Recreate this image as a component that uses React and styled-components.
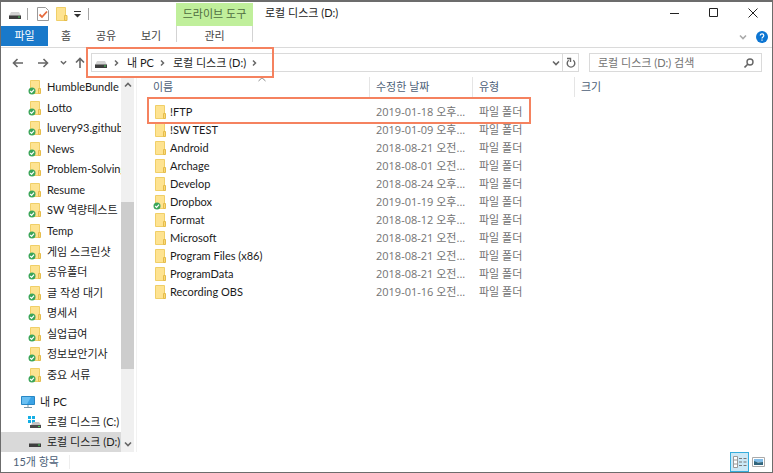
import React from 'react'
import styled, { createGlobalStyle, ThemeProvider } from 'styled-components'

const theme = {
  text: '#1b1b1b',
  muted: '#737373',
  heading: '#4d5f78',
  line: '#dadada',
  accent: '#f5825f',
  blue: '#1979ca'
}

const GlobalStyle = createGlobalStyle`
  * {
    box-sizing: border-box;
  }
  body {
    margin: 0;
    font-family: Lato, "Noto Sans CJK KR", sans-serif;
    font-size: 11px;
    line-height: 18px;
  }
  button, input {
    font: inherit;
    color: inherit;
  }
  a {
    color: inherit;
    text-decoration: none;
  }
  svg {
    display: block;
    flex: none;
  }
`

const Window = styled.div`
  display: flex;
  flex-direction: column;
  height: 100vh;
  border: 1px solid #6c6c6c;
  border-top-width: 2px;
  background: #fff;
  color: ${props => props.theme.text};
  overflow: hidden;
`

const TitleBar = styled.header`
  display: flex;
  height: 24px;
  flex: none;
`

const QuickAccess = styled.div`
  display: flex;
  align-items: center;
  width: 175px;
  padding-left: 7px;
`

const Divider = styled.span`
  width: 1px;
  height: 12px;
  margin: 0 5px;
  background: #a5a5a5;
`

const IconButton = styled.button`
  display: flex;
  align-items: center;
  justify-content: center;
  flex: none;
  width: ${props => props.$width || 20}px;
  height: ${props => props.$height || 20}px;
  padding: 0;
  border: 0;
  background: none;
  color: ${props => props.$color || '#666'};
`

const ToolGroup = styled.div`
  width: 77px;
  margin-top: 1px;
  padding-top: 2px;
  background: #c0ef9b;
  color: #4f6c40;
  text-align: center;
`

const WindowTitle = styled.h1`
  flex: 1;
  margin: 0;
  padding: 2px 12px;
  font-size: 11px;
  font-weight: 400;
`

const Tabs = styled.nav`
  display: flex;
  flex: none;
  height: 22px;
  border-bottom: 1px solid ${props => props.theme.line};
`

const Tab = styled.button`
  width: ${props => props.$width}px;
  height: 20px;
  padding: 0;
  border: 0;
  background: ${props => props.$primary ? props.theme.blue : 'none'};
  color: ${props => props.$primary ? '#fff' : '#444'};
`

const ToolTab = styled(Tab)`
  height: 16px;
  margin-left: 2px;
  padding-top: 2px;
  border: solid #d3d3d3;
  border-width: 0 1px;
  line-height: 16px;
`

const Spacer = styled.div`
  flex: 1;
`

const Toolbar = styled.div`
  display: flex;
  flex: none;
  align-items: center;
  height: 29px;
  padding: 0 10px 0 5px;
`

const Address = styled.div`
  position: relative;
  display: flex;
  flex: 1;
  align-items: center;
  height: 19px;
  border: 1px solid ${props => props.theme.line};
`

const Crumbs = styled.ol`
  display: flex;
  flex: 1;
  align-items: center;
  margin: 0;
  padding: 0 0 0 2px;
  list-style: none;
  white-space: nowrap;

  li {
    display: flex;
    align-items: center;
  }
`

const CrumbArrow = styled.svg`
  margin: 0 8px 0 6px;
`

const AddressMark = styled.div`
  position: absolute;
  z-index: 1;
  top: -7px;
  left: -6px;
  width: 188px;
  height: 31px;
  border: 2px solid ${props => props.theme.accent};
  pointer-events: none;
`

const RefreshCell = styled.div`
  border-left: 1px solid ${props => props.theme.line};
`

const Search = styled.form`
  display: flex;
  align-items: center;
  width: 173px;
  height: 19px;
  margin-left: 10px;
  border: 1px solid ${props => props.theme.line};
`

const SearchInput = styled.input`
  flex: 1;
  min-width: 0;
  height: 17px;
  padding: 0 0 0 8px;
  border: 0;
  outline: 0;

  &::placeholder {
    color: ${props => props.theme.muted};
    opacity: 1;
  }
`

const Body = styled.div`
  display: flex;
  flex: 1;
  min-height: 0;
`

const Sidebar = styled.aside`
  display: flex;
  flex: none;
  width: 136px;
  border-right: 1px solid #f2f2f2;
`

const Tree = styled.nav`
  flex: 1;
  min-width: 0;
  overflow: hidden;
`

const FolderList = styled.ul`
  display: grid;
  grid-auto-rows: 1fr;
  height: 308px;
  margin: 0 0 7px;
  padding: 0;
  list-style: none;
`

const DriveList = styled.ul`
  margin: 0;
  padding: 0;
  list-style: none;
`

const TreeLink = styled.a`
  display: flex;
  align-items: center;
  gap: ${props => props.$root ? 4 : 5}px;
  height: ${props => props.$folder ? '100%' : '20px'};
  padding-left: ${props => props.$root ? 20 : 27}px;
  background: ${props => props.$selected ? '#d9d9d9' : 'none'};
  white-space: nowrap;
`

const Scrollbar = styled.div`
  display: flex;
  flex-direction: column;
  width: 13px;
  margin-right: 2px;
  background: #f0f0f0;
`

const Track = styled.div`
  display: grid;
  grid-template-rows: 109fr 167fr 67fr;
  flex: 1;
`

const Thumb = styled.div`
  grid-row: 2;
  background: #cdcdcd;
`

const Files = styled.main`
  position: relative;
  flex: 1;
  min-width: 0;
  padding-left: 10px;
`

const FileTable = styled.table`
  width: 100%;
  table-layout: fixed;
  border-collapse: separate;
  border-spacing: 0;

  th {
    position: relative;
    height: 20px;
    padding: 0 0 0 6px;
    border-right: 1px solid #e5e5e5;
    color: ${props => props.theme.heading};
    font-weight: 400;
    text-align: left;
  }
  th:last-child {
    border: 0;
  }
  td {
    height: 18px;
    padding: 0 6px;
    color: ${props => props.theme.muted};
    white-space: nowrap;
  }
  tbody::before {
    content: "";
    display: block;
    height: 6px;
  }
`

const DateCell = styled.td`
  font-family: "Open Sans", "Noto Sans CJK KR", sans-serif;
`

const SortArrow = styled.svg`
  position: absolute;
  top: 0;
  left: 50%;
`

const FileName = styled.a`
  display: flex;
  align-items: center;
  gap: 3px;
  color: ${props => props.theme.text};
`

const RowMark = styled.div`
  position: absolute;
  top: 20px;
  left: 10px;
  width: 384px;
  height: 27px;
  border: 2px solid ${props => props.theme.accent};
  pointer-events: none;
`

const StatusBar = styled.footer`
  display: flex;
  flex: none;
  align-items: center;
  height: 20px;
  padding: 0 4px 0 12px;
  color: ${props => props.theme.heading};
`

const Count = styled.span`
  padding-right: 10px;
  border-right: 1px solid #eee;
  line-height: 14px;
`

const ViewButton = styled.button`
  display: flex;
  align-items: center;
  justify-content: center;
  width: 19px;
  height: 20px;
  padding: 0;
  border: ${props => props.$active ? '1px solid #35addc' : '0'};
  background: ${props => props.$active ? '#cbe8f6' : 'none'};
`

const DriveIcon = () =>
  <svg width="14" height="16" viewBox="0 0 14 16">
    <path d="M3 6h8l2 4H1z" fill="#d2d2d2" />
    <path d="M1 9.500h12V13H1z" fill="#3d3d3d" />
    <path d="M10 11h2" stroke="#4bd35f" />
  </svg>

const SystemDriveIcon = () =>
  <svg width="14" height="16" viewBox="0 0 14 16">
    <path d="M0 2h3v3H0zM4 2h3v3H4zM0 6h3v3H0zM4 6h3v3H4z" fill="#13aee5" />
    <path d="M5 8h6l2 3H3z" fill="#c4c4c4" />
    <path d="M2 11h11v3H2z" fill="#4b4b4b" />
    <path d="M10 12.500h2" stroke="#4bd35f" />
  </svg>

const FolderIcon = ({ synced }) =>
  <svg width="14" height="16" viewBox="0 0 14 16">
    <path d="M2.500 1.500h9v13h-9z" fill="#fee391" stroke="#f0cf68" />
    <path d="M10.500 9.500h2v5h-2z" fill="#fbd976" stroke="#e5bc4c" />
    {synced &&
      <>
        <circle cx="4" cy="12" r="3.500" fill="#3ba55a" />
        <path d="M2.200 12l1.400 1.400 2.400-2.700" fill="none" stroke="#fff" strokeWidth="1.200" />
      </>}
  </svg>

const PlainFolderIcon = () =>
  <svg width="12" height="16" viewBox="0 0 12 16">
    <path d="M.5 1.500h9v13h-9z" fill="#fee391" stroke="#f0cf68" />
    <path d="M8.500 9.500H11v5H8.500z" fill="#fbd976" stroke="#e5bc4c" />
  </svg>

const ComputerIcon = () =>
  <svg width="15" height="14" viewBox="0 0 15 14">
    <path d="M.5 1.500h13v8H.5z" fill="#3ba3e6" stroke="#2787c5" />
    <path d="M1 2h9L6 9H1z" fill="#69bff2" />
    <path d="M3 12.500h8M6 11h2" stroke="#7b95a5" />
  </svg>

const PropertiesIcon = () =>
  <svg width="12" height="14" viewBox="0 0 12 14">
    <path d="M.5.5h8l3 3v10H.5z" fill="#fff" stroke="#999" />
    <path d="M2.500 7.500l2.500 2.500 5-5.500" fill="none" stroke="#e5693b" strokeWidth="1.800" />
  </svg>

const Chevron = ({ dir, size = 8 }) => {
  const paths = {
    down: 'M1 2.500l3 3 3-3',
    up: 'M1 5.500l3-3 3 3'
  }
  return (
    <svg width={size} height={size} viewBox="0 0 8 8">
      <path d={paths[dir]} fill="none" stroke="currentColor" strokeWidth="1.600" />
    </svg>
  )
}

const Arrow = ({ rotate }) =>
  <svg width="12" height="12" viewBox="0 0 12 12">
    <path
      d="M11 6H1.500M5.500 2l-4 4 4 4"
      fill="none"
      stroke="currentColor"
      strokeWidth="1.600"
      transform={`rotate(${rotate} 6 6)`}
    />
  </svg>

const Crumb = ({ children }) =>
  <li>
    <CrumbArrow width="5" height="8" viewBox="0 0 5 8">
      <path d="M1 1.500L3.500 4 1 6.500" fill="none" stroke="#666" strokeWidth="1.500" />
    </CrumbArrow>
    {children && <a href="#path">{children}</a>}
  </li>

const folders = [
  'HumbleBundle S', 'Lotto', 'luvery93.github.', 'News', 'Problem-Solving',
  'Resume', 'SW 역량테스트', 'Temp', '게임 스크린샷', '공유폴더', '글 작성 대기',
  '명세서', '실업급여', '정보보안기사', '중요 서류'
]

const files = [
  { name: '!FTP', date: '2019-01-18 오후...' },
  { name: '!SW TEST', date: '2019-01-09 오후...' },
  { name: 'Android', date: '2018-08-21 오전...' },
  { name: 'Archage', date: '2018-08-01 오전...' },
  { name: 'Develop', date: '2018-08-24 오후...' },
  { name: 'Dropbox', date: '2019-01-19 오후...', synced: true },
  { name: 'Format', date: '2018-08-12 오후...' },
  { name: 'Microsoft', date: '2018-08-21 오전...' },
  { name: 'Program Files (x86)', date: '2018-08-21 오전...' },
  { name: 'ProgramData', date: '2018-08-21 오전...' },
  { name: 'Recording OBS', date: '2019-01-16 오전...' }
]

const Caption = () =>
  <TitleBar>
    <QuickAccess>
      <DriveIcon />
      <Divider />
      <IconButton aria-label="속성"><PropertiesIcon /></IconButton>
      <IconButton $width={18} aria-label="새 폴더"><PlainFolderIcon /></IconButton>
      <IconButton $width={12} aria-label="빠른 실행 도구 모음 사용자 지정">
        <svg width="7" height="7" viewBox="0 0 7 7">
          <path d="M0 .5h7" stroke="#333" />
          <path d="M0 3h7L3.500 6.500z" fill="#333" />
        </svg>
      </IconButton>
      <Divider />
    </QuickAccess>
    <ToolGroup>드라이브 도구</ToolGroup>
    <WindowTitle>로컬 디스크 (D:)</WindowTitle>
    <IconButton $width={39} $height={22} $color="#222" aria-label="최소화">
      <svg width="10" height="10"><path d="M0 5.500h9" stroke="currentColor" /></svg>
    </IconButton>
    <IconButton $width={39} $height={22} $color="#222" aria-label="최대화">
      <svg width="10" height="10"><path d="M.5.5h8v8h-8z" fill="none" stroke="currentColor" /></svg>
    </IconButton>
    <IconButton $width={39} $height={22} $color="#222" aria-label="닫기">
      <svg width="10" height="10"><path d="M.5.5l9 9M9.500.5l-9 9" stroke="currentColor" /></svg>
    </IconButton>
  </TitleBar>

const Ribbon = () =>
  <Tabs>
    <Tab $width={47} $primary>파일</Tab>
    <Tab $width={36}>홈</Tab>
    <Tab $width={44}>공유</Tab>
    <Tab $width={46}>보기</Tab>
    <ToolTab $width={77}>관리</ToolTab>
    <Spacer />
    <IconButton $width={18} $height={22} $color="#aaa" aria-label="리본 확장"><Chevron dir="down" /></IconButton>
    <IconButton $height={22} aria-label="도움말">
      <svg width="12" height="12" viewBox="0 0 12 12">
        <circle cx="6" cy="6" r="6" fill="#0c75d2" />
        <path d="M4.300 4.600c0-2.400 3.500-2.200 3.500 0C7.800 6 6 5.900 6 7.500M6 8.600v1.200" fill="none" stroke="#fff" strokeWidth="1.200" />
      </svg>
    </IconButton>
  </Tabs>

const Navigation = () =>
  <Toolbar>
    <IconButton $width={23} aria-label="뒤로"><Arrow rotate={0} /></IconButton>
    <IconButton $width={28} aria-label="앞으로"><Arrow rotate={180} /></IconButton>
    <IconButton $width={12} aria-label="최근 위치"><Chevron dir="down" size={7} /></IconButton>
    <IconButton $width={22} aria-label="위로"><Arrow rotate={90} /></IconButton>
    <Address>
      <AddressMark />
      <Crumbs>
        <li><DriveIcon /></li>
        <Crumb>내 PC</Crumb>
        <Crumb>로컬 디스크 (D:)</Crumb>
        <Crumb />
      </Crumbs>
      <IconButton $width={12} $height={17} aria-label="이전 위치"><Chevron dir="down" /></IconButton>
      <RefreshCell>
        <IconButton $width={15} $height={17} aria-label="새로 고침">
          <svg width="10" height="12" viewBox="0 0 10 12">
            <path d="M7.300 3.300A3.800 3.800 0 1 1 2.700 3.300" fill="none" stroke="currentColor" strokeWidth="1.400" />
            <path d="M1 1.500h3.500V5" fill="none" stroke="currentColor" strokeWidth="1.400" />
          </svg>
        </IconButton>
      </RefreshCell>
    </Address>
    <Search>
      <SearchInput aria-label="검색" placeholder="로컬 디스크 (D:) 검색" />
      <IconButton $width={24} $height={17} aria-label="검색 시작">
        <svg width="10" height="10" viewBox="0 0 10 10">
          <circle cx="6" cy="4" r="3" fill="none" stroke="currentColor" strokeWidth="1.400" />
          <path d="M4 6L.5 9.500" stroke="currentColor" strokeWidth="1.600" />
        </svg>
      </IconButton>
    </Search>
  </Toolbar>

const FolderTree = () =>
  <Sidebar>
    <Tree>
      <FolderList>
        {folders.map(name =>
          <li key={name}>
            <TreeLink href="#folder" $folder><FolderIcon synced />{name}</TreeLink>
          </li>
        )}
      </FolderList>
      <DriveList>
        <li><TreeLink href="#pc" $root><ComputerIcon />내 PC</TreeLink></li>
        <li><TreeLink href="#c"><SystemDriveIcon />로컬 디스크 (C:)</TreeLink></li>
        <li><TreeLink href="#d" $selected><DriveIcon />로컬 디스크 (D:)</TreeLink></li>
      </DriveList>
    </Tree>
    <Scrollbar>
      <IconButton $width={13} $height={16} aria-label="위로 스크롤"><Chevron dir="up" /></IconButton>
      <Track><Thumb /></Track>
      <IconButton $width={13} $height={16} aria-label="아래로 스크롤"><Chevron dir="down" /></IconButton>
    </Scrollbar>
  </Sidebar>

const FileList = () =>
  <Files>
    <FileTable>
      <colgroup>
        <col width="223" />
        <col width="103" />
        <col width="102" />
        <col />
      </colgroup>
      <thead>
        <tr>
          <th>
            이름
            <SortArrow width="8" height="5" viewBox="0 0 8 5">
              <path d="M.5 4L4 .8 7.500 4" fill="none" stroke="#888" />
            </SortArrow>
          </th>
          <th>수정한 날짜</th>
          <th>유형</th>
          <th>크기</th>
        </tr>
      </thead>
      <tbody>
        {files.map(file =>
          <tr key={file.name}>
            <td>
              <FileName href="#file"><FolderIcon synced={file.synced} />{file.name}</FileName>
            </td>
            <DateCell>{file.date}</DateCell>
            <td>파일 폴더</td>
            <td />
          </tr>
        )}
      </tbody>
    </FileTable>
    <RowMark />
  </Files>

const App = () =>
  <ThemeProvider theme={theme}>
    <GlobalStyle />
    <Window>
      <Caption />
      <Ribbon />
      <Navigation />
      <Body>
        <FolderTree />
        <FileList />
      </Body>
      <StatusBar>
        <Count>15개 항목</Count>
        <Spacer />
        <ViewButton $active aria-label="자세히">
          <svg width="14" height="12" viewBox="0 0 14 12">
            <path d="M.5.5h4v11h-4zM.5 4h4M.5 8h4" fill="#fff" stroke="#999" />
            <path d="M6 2.500h3M10.500 2.500h3M6 6h3M10.500 6h3M6 9.500h3M10.500 9.500h3" stroke="#777" />
          </svg>
        </ViewButton>
        <ViewButton aria-label="큰 아이콘">
          <svg width="13" height="10" viewBox="0 0 13 10">
            <path d="M.5.5h12v9H.5z" fill="#fff" stroke="#aaa" />
            <path d="M2 2h9v3H2z" fill="#80bce8" />
            <path d="M2 4l4 1.500L11 5v3H2z" fill="#31657c" />
          </svg>
        </ViewButton>
      </StatusBar>
    </Window>
  </ThemeProvider>

export default App
